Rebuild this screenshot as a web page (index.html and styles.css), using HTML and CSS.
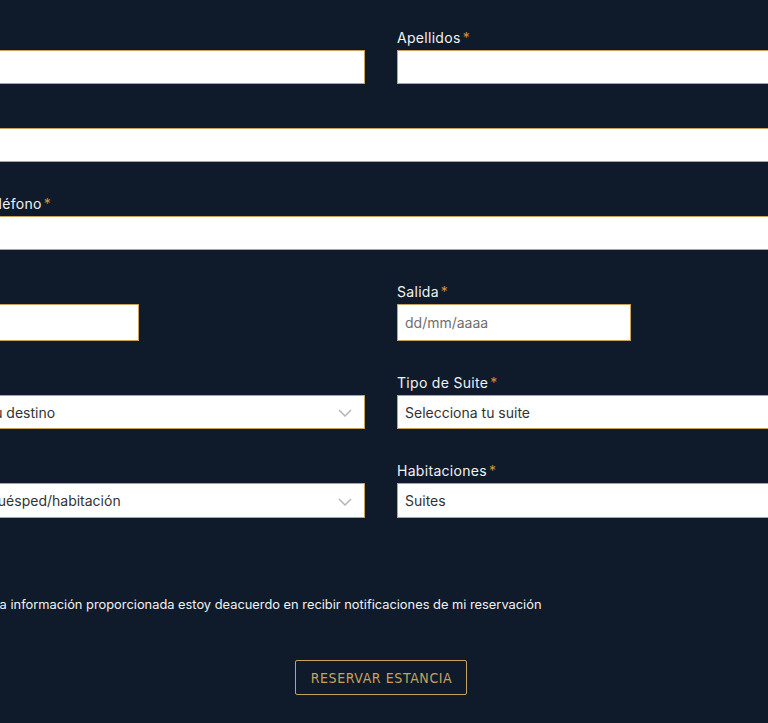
FILE: index.html
```html
<!DOCTYPE html>
<html lang="es">
<head>
  <meta charset="UTF-8" />
  <meta name="viewport" content="width=device-width, initial-scale=1.0" />
  <title>Reservación</title>
  <link rel="stylesheet" href="styles.css">
</head>
<body>
  <form class="booking">

    <!-- Nombre y apellidos -->
    <div class="row tight">
      <div class="field">
        <label>Nombre<span class="req">*</span></label>
        <input type="text" class="box" />
      </div>
      <div class="field">
        <label>Apellidos<span class="req">*</span></label>
        <input type="text" class="box" />
      </div>
    </div>

    <div class="row full">
      <div class="field">
        <label>Email<span class="req">*</span></label>
        <input type="text" class="box" />
      </div>
    </div>

    <div class="row full">
      <div class="field">
        <label>Número de teléfono<span class="req">*</span></label>
        <input type="text" class="box" />
      </div>
    </div>

    <!-- Fechas -->
    <div class="row">
      <div class="field">
        <label>Llegada<span class="req">*</span></label>
        <input type="text" class="box date" placeholder="dd/mm/aaaa" />
      </div>
      <div class="field">
        <label>Salida<span class="req">*</span></label>
        <input type="text" class="box date" placeholder="dd/mm/aaaa" />
      </div>
    </div>

    <!-- Destino y suite -->
    <div class="row">
      <div class="field">
        <label>Destino<span class="req">*</span></label>
        <div class="select-wrap">
          <select class="box">
            <option>Selecciona tu destino</option>
          </select>
          <svg class="chevron" width="14" height="8" viewBox="0 0 14 8"><path d="M1 1l6 6 6-6" fill="none" stroke="#b5b5b5" stroke-width="1.5"/></svg>
        </div>
      </div>
      <div class="field">
        <label>Tipo de Suite<span class="req">*</span></label>
        <div class="select-wrap">
          <select class="box">
            <option>Selecciona tu suite</option>
          </select>
          <svg class="chevron" width="14" height="8" viewBox="0 0 14 8"><path d="M1 1l6 6 6-6" fill="none" stroke="#b5b5b5" stroke-width="1.5"/></svg>
        </div>
      </div>
    </div>

    <!-- Huéspedes -->
    <div class="row last">
      <div class="field">
        <label>Huéspedes<span class="req">*</span></label>
        <div class="select-wrap">
          <select class="box tall">
            <option>Selecciona huésped/habitación</option>
          </select>
          <svg class="chevron" width="14" height="8" viewBox="0 0 14 8"><path d="M1 1l6 6 6-6" fill="none" stroke="#b5b5b5" stroke-width="1.5"/></svg>
        </div>
      </div>
      <div class="field">
        <label>Habitaciones<span class="req">*</span></label>
        <input type="text" class="box tall" value="Suites" />
      </div>
    </div>

    <div class="consent">
      <input type="checkbox" id="acepto" />
      <label for="acepto">Acepto que la información proporcionada estoy deacuerdo en recibir notificaciones de mi reservación</label>
    </div>

    <div class="actions">
      <button type="button" class="btn">Reservar estancia</button>
    </div>
  </form>
</body>
</html>
```

FILE: styles.css
```css
/* colores */
:root {
  --bg: #0f1b2b;
  --gold: #c9a15a;
  --star: #d1913f;
  --text: #f2f2f2;
}

body {
  margin: 0;
  background: var(--bg);
  color: var(--text);
  font-family: Inter, "Open Sans", Arial, sans-serif;
  overflow: hidden;
}

/* el formulario es más ancho que la ventana */
.booking {
  width: 952px;
  margin-left: -95px;
  padding-top: 29px;
}

.row {
  display: grid;
  grid-template-columns: 1fr 1fr;
  column-gap: 32px;
  margin-bottom: 33px;
}

.row.full {
  grid-template-columns: 1fr;
}

.row.tight {
  margin-bottom: 23px;
}

.row.last {
  margin-bottom: 0;
}

.field label {
  display: block;
  font-size: 14px;
  line-height: 18px;
  letter-spacing: 0.3px;
  margin-bottom: 3px;
}

.req {
  color: var(--star);
  margin-left: 2px;
}

.box {
  display: block;
  width: 100%;
  height: 34px;
  box-sizing: border-box;
  margin: 0;
  padding: 0 7px;
  border: 1px solid var(--gold);
  border-radius: 0;
  background: #fff;
  color: #333;
  font-family: inherit;
  font-size: 14px;
  outline: none;
}

.box.date {
  width: 234px;
  height: 37px;
}

.box.tall {
  height: 35px;
}

.box::placeholder {
  color: #6f6f6f;
}

select.box {
  appearance: none;
  -webkit-appearance: none;
}

.select-wrap {
  position: relative;
}

.chevron {
  position: absolute;
  right: 13px;
  top: 50%;
  margin-top: -3px;
  pointer-events: none;
}

/* aviso */
.consent {
  display: flex;
  align-items: center;
  gap: 5px;
  margin-top: 78px;
  font-size: 12.85px;
  line-height: 18px;
}

.consent input {
  margin: 0;
}

.actions {
  display: flex;
  justify-content: center;
  margin-top: 46px;
}

.btn {
  background: transparent;
  border: 1px solid var(--gold);
  border-radius: 2px;
  color: var(--gold);
  height: 35px;
  padding: 0 14px 0 15px;
  font-family: "Liberation Sans Narrow", "DejaVu Sans Condensed", sans-serif;
  font-stretch: condensed;
  font-size: 14px;
  font-weight: 500;
  letter-spacing: 0.6px;
  text-transform: uppercase;
  cursor: pointer;
}
```
